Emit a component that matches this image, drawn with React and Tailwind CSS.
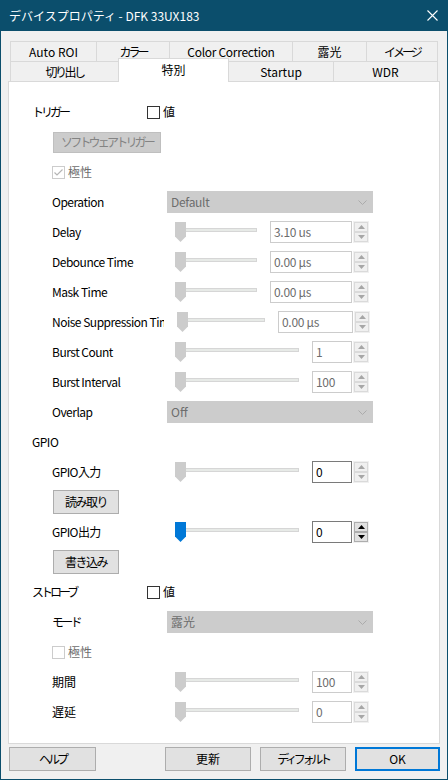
import React from "react";

const FONT = "font-['Noto_Sans_CJK_JP',sans-serif]";

function Thumb({ blue }) {
  return (
    <svg width="11" height="20" viewBox="0 0 11 20" className="absolute left-0 top-0">
      <path d="M0 0H11V14.5L5.5 20L0 14.5Z" fill={blue ? "#0078d7" : "#cccccc"} />
    </svg>
  );
}

function Slider({ cls, blue }) {
  return (
    <div className={`relative h-[20px] shrink-0 ${cls}`}>
      <div className="absolute left-[6px] right-0 top-[6px] h-[4px] border border-[#d6d6d6] bg-[#e7eae7]" />
      <Thumb blue={blue} />
    </div>
  );
}

function Arrow({ up, color }) {
  return (
    <svg width="7" height="4" viewBox="0 0 7 4">
      <path d={up ? "M3.5 0L7 4H0Z" : "M0 0H7L3.5 4Z"} fill={color} />
    </svg>
  );
}

function Spin({ enabled }) {
  const btn = enabled
    ? "bg-[#e1e1e1] border-[#adadad]"
    : "bg-[#f0f0f0] border-[#dadada]";
  const color = enabled ? "#000000" : "#a6a6a6";
  return (
    <div className="ml-[1px] flex h-[22px] w-[16px] shrink-0 flex-col bg-[#f0f0f0] p-[1px]">
      <div className={`flex h-[10px] items-center justify-center border ${btn}`}>
        <Arrow up color={color} />
      </div>
      <div className={`flex h-[10px] items-center justify-center border ${btn}`}>
        <Arrow color={color} />
      </div>
    </div>
  );
}

function Edit({ cls, value, enabled }) {
  return (
    <div
      className={`flex h-[22px] shrink-0 items-center border bg-white px-[3px] text-[12px] leading-[16px] tracking-[-0.3px] ${
        enabled ? "border-[#7a7a7a] text-black" : "border-[#cccccc] text-[#6d6d6d]"
      } ${cls}`}
    >
      {value}
    </div>
  );
}

function Combo({ value, cls = "" }) {
  return (
    <div className="flex h-[22px] w-[206px] items-center justify-between border border-[#cccccc] bg-[#cccccc] pl-[3px] pr-[5px] text-[12px] leading-[16px] text-[#6d6d6d]">
      <span className={cls}>{value}</span>
      <svg width="9" height="5" viewBox="0 0 9 5">
        <path d="M0.5 0.5L4.5 4.5L8.5 0.5" stroke="#ababab" fill="none" />
      </svg>
    </div>
  );
}

function Check({ kind }) {
  if (kind === "enabled") {
    return <div className="h-[13px] w-[13px] shrink-0 border border-[#333333] bg-white" />;
  }
  return (
    <div className="flex h-[13px] w-[13px] shrink-0 items-center justify-center border border-[#cccccc] bg-white">
      {kind === "checked" && (
        <svg width="11" height="11" viewBox="0 0 11 11">
          <path d="M1.5 5.5L4 8L9.5 2.5" stroke="#b5b5b5" strokeWidth="1.2" fill="none" />
        </svg>
      )}
    </div>
  );
}

function Row({ children, cls = "pl-[43px]" }) {
  return <div className={`flex h-[30px] items-center ${cls}`}>{children}</div>;
}

function Label({ children, cls = "w-[123px]", t = "tracking-[-0.5px]" }) {
  return (
    <div className={`shrink-0 overflow-hidden whitespace-nowrap text-[12px] leading-[16px] text-black ${t} ${cls}`}>
      {children}
    </div>
  );
}

function SliderRowWide({ label, value }) {
  return (
    <Row>
      <Label>{label}</Label>
      <Slider cls="w-[82px]" />
      <Edit cls="ml-[13px] w-[82px]" value={value} />
      <Spin />
    </Row>
  );
}

function SliderRowShort({ label, value, enabled, blue, spinEnabled, t }) {
  return (
    <Row>
      <Label t={t}>{label}</Label>
      <Slider cls="w-[124px]" blue={blue} />
      <Edit cls="ml-[13px] w-[40px]" value={value} enabled={enabled} />
      <Spin enabled={spinEnabled} />
    </Row>
  );
}

function Tab({ children, cls }) {
  return (
    <div
      className={`flex shrink-0 items-center justify-center whitespace-nowrap border-[#d9d9d9] bg-[#f0f0f0] text-[12px] leading-[16px] text-black ${cls}`}
    >
      {children}
    </div>
  );
}

function Btn({ children, cls }) {
  return (
    <div
      className={`flex h-[24px] shrink-0 items-center justify-center whitespace-nowrap border bg-[#e1e1e1] text-[12px] leading-[16px] text-black ${cls}`}
    >
      {children}
    </div>
  );
}

export default function App() {
  return (
    <div
      className={`flex h-[780px] w-[448px] flex-col overflow-hidden border-x border-b border-[#0b4e6c] bg-[#f0f0f0] ${FONT}`}
    >
      {/* Title bar */}
      <div className="flex h-[31px] shrink-0 items-center justify-between bg-[#0b4e6c] pl-[8px] pr-[9px]">
        <span className="text-[12px] leading-[16px] text-white">デバイスプロパティ - DFK 33UX183</span>
        <svg width="11" height="11" viewBox="0 0 11 11">
          <path d="M0.5 0.5L10.5 10.5M10.5 0.5L0.5 10.5" stroke="#ffffff" strokeWidth="1.1" />
        </svg>
      </div>

      {/* Tabs */}
      <div className="ml-[9px] mt-[10px] flex flex-col">
        <div className="flex h-[20px]">
          <Tab cls="h-[20px] w-[86px] border-l border-t">Auto ROI</Tab>
          <Tab cls="h-[20px] w-[73px] border-l border-t tracking-[-3px]">カラー</Tab>
          <Tab cls="h-[20px] w-[123px] border-l border-t tracking-[-0.3px]">Color Correction</Tab>
          <Tab cls="h-[20px] w-[74px] border-l border-t">露光</Tab>
          <Tab cls="h-[20px] w-[72px] border-x border-t tracking-[-3px]">イメージ</Tab>
        </div>
        <div className="flex h-[20px] items-start">
          <Tab cls="h-[20px] w-[108px] border-l border-t tracking-[-2.5px]">切り出し</Tab>
          <Tab cls="relative z-10 -mt-[3px] h-[24px] w-[111px] border-x border-t !bg-white pb-[1px]">特別</Tab>
          <Tab cls="h-[20px] w-[104px] border-t">Startup</Tab>
          <Tab cls="h-[20px] w-[105px] border-x border-t">WDR</Tab>
        </div>
      </div>

      {/* Panel */}
      <div className="ml-[7px] flex h-[663px] w-[432px] shrink-0 flex-col border border-[#d9d9d9] bg-white pt-[15px]">
        {/* トリガー */}
        <Row cls="pl-[23px]">
          <Label cls="w-[115px]" t="tracking-[-3px]">トリガー</Label>
          <Check kind="enabled" />
          <span className="ml-[3px] text-[12px] leading-[16px] text-black">値</span>
        </Row>
        <Row cls="pl-[44px]">
          <div className="flex h-[21px] w-[108px] items-center justify-center whitespace-nowrap border border-[#bfbfbf] bg-[#cccccc] text-[12px] leading-[16px] tracking-[-2.8px] text-[#838383]">
            ソフトウェアトリガー
          </div>
        </Row>
        <Row>
          <Check kind="checked" />
          <span className="ml-[3px] text-[12px] leading-[16px] text-[#6d6d6d]">極性</span>
        </Row>
        <Row>
          <Label cls="w-[115px]">Operation</Label>
          <Combo value="Default" cls="tracking-[-0.3px]" />
        </Row>
        <SliderRowWide label="Delay" value="3.10 us" />
        <SliderRowWide label="Debounce Time" value="0.00 μs" />
        <SliderRowWide label="Mask Time" value="0.00 μs" />
        <Row>
          <div className="flex w-[125px] shrink-0">
            <Label cls="w-[112px]">Noise Suppression Time</Label>
          </div>
          <Slider cls="w-[88px]" />
          <Edit cls="ml-[13px] w-[75px]" value="0.00 μs" />
          <Spin />
        </Row>
        <SliderRowShort label="Burst Count" value="1" />
        <SliderRowShort label="Burst Interval" value="100" />
        <Row>
          <Label cls="w-[115px]">Overlap</Label>
          <Combo value="Off" />
        </Row>

        {/* GPIO */}
        <Row cls="pl-[23px]">
          <Label>GPIO</Label>
        </Row>
        <SliderRowShort label="GPIO入力" value="0" enabled t="tracking-[-0.6px]" />
        <Row cls="pl-[44px]">
          <Btn cls="h-[21px] w-[66px] border-[#adadad] tracking-[-1.5px]">読み取り</Btn>
        </Row>
        <SliderRowShort label="GPIO出力" value="0" enabled blue spinEnabled t="tracking-[-0.6px]" />
        <Row cls="pl-[44px]">
          <Btn cls="h-[21px] w-[66px] border-[#adadad] tracking-[-1.5px]">書き込み</Btn>
        </Row>

        {/* ストロボ */}
        <Row cls="pl-[23px]">
          <Label cls="w-[115px]" t="tracking-[-3px]">ストローブ</Label>
          <Check kind="enabled" />
          <span className="ml-[3px] text-[12px] leading-[16px] text-black">値</span>
        </Row>
        <Row>
          <Label cls="w-[115px]" t="tracking-[-2.7px]">モード</Label>
          <Combo value="露光" />
        </Row>
        <Row>
          <Check kind="unchecked" />
          <span className="ml-[3px] text-[12px] leading-[16px] text-[#6d6d6d]">極性</span>
        </Row>
        <SliderRowShort label="期間" value="100" t="tracking-[0px]" />
        <SliderRowShort label="遅延" value="0" t="tracking-[0px]" />
      </div>

      {/* Bottom buttons */}
      <div className="mt-[3px] flex">
        <Btn cls="ml-[8px] w-[87px] border-[#adadad] tracking-[-3px]">ヘルプ</Btn>
        <Btn cls="ml-[69px] w-[86px] border-[#adadad]">更新</Btn>
        <Btn cls="ml-[9px] w-[86px] border-[#adadad] tracking-[-3.3px]">ディフォルト</Btn>
        <Btn cls="ml-[9px] w-[85px] border-2 border-[#0078d7]">OK</Btn>
      </div>
    </div>
  );
}
